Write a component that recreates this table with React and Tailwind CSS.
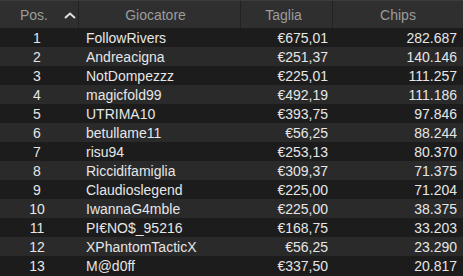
import React from "react";

const rows = [
  [1, "FollowRivers", "€675,01", "282.687"],
  [2, "Andreacigna", "€251,37", "140.146"],
  [3, "NotDompezzz", "€225,01", "111.257"],
  [4, "magicfold99", "€492,19", "111.186"],
  [5, "UTRIMA10", "€393,75", "97.846"],
  [6, "betullame11", "€56,25", "88.244"],
  [7, "risu94", "€253,13", "80.370"],
  [8, "Riccidifamiglia", "€309,37", "71.375"],
  [9, "Claudioslegend", "€225,00", "71.204"],
  [10, "IwannaG4mble", "€225,00", "38.375"],
  [11, "PI€NO$_95216", "€168,75", "33.203"],
  [12, "XPhantomTacticX", "€56,25", "23.290"],
  [13, "M@d0ff", "€337,50", "20.817"],
];

export default function App() {
  return (
    <div
      className="w-[463px] h-[276px] bg-[#1d1d1d] overflow-hidden text-[14px] leading-none"
      style={{ fontFamily: '"Liberation Sans", Arial, sans-serif' }}
    >
      <div className="grid grid-cols-[79px_162px_92px_130px] h-[28px] bg-[#2f2f2f] border-t border-[#3c3c3c] text-[#9c9c9c]">
        <div className="flex items-center justify-start gap-[16px] pl-[20px] border-r border-[#222]">
          <span>Pos.</span>
          <svg width="12" height="7" viewBox="0 0 12 7" className="mt-[1px]">
            <path d="M1 6 L6 1.5 L11 6" fill="none" stroke="#e0e0e0" strokeWidth="2" />
          </svg>
        </div>
        <div className="flex items-center justify-center pr-[8px] border-r border-[#222]">Giocatore</div>
        <div className="flex items-center justify-center pr-[6px] border-r border-[#222]">Taglia</div>
        <div className="flex items-center justify-center">Chips</div>
      </div>
      {rows.map(([p, n, t, c], i) => (
        <div
          key={p}
          className={
            "grid grid-cols-[79px_162px_92px_130px] h-[19px] items-center text-[#e6e6e6] " +
            (i % 2 === 0 ? "bg-[#1c1c1c]" : "bg-[#2a2a2a]")
          }
        >
          <div className="text-center pr-[5px]">{p}</div>
          <div className="pl-[7px]">{n}</div>
          <div className="text-right pr-[5px]">{t}</div>
          <div className="text-right pr-[6px]">{c}</div>
        </div>
      ))}
    </div>
  );
}
